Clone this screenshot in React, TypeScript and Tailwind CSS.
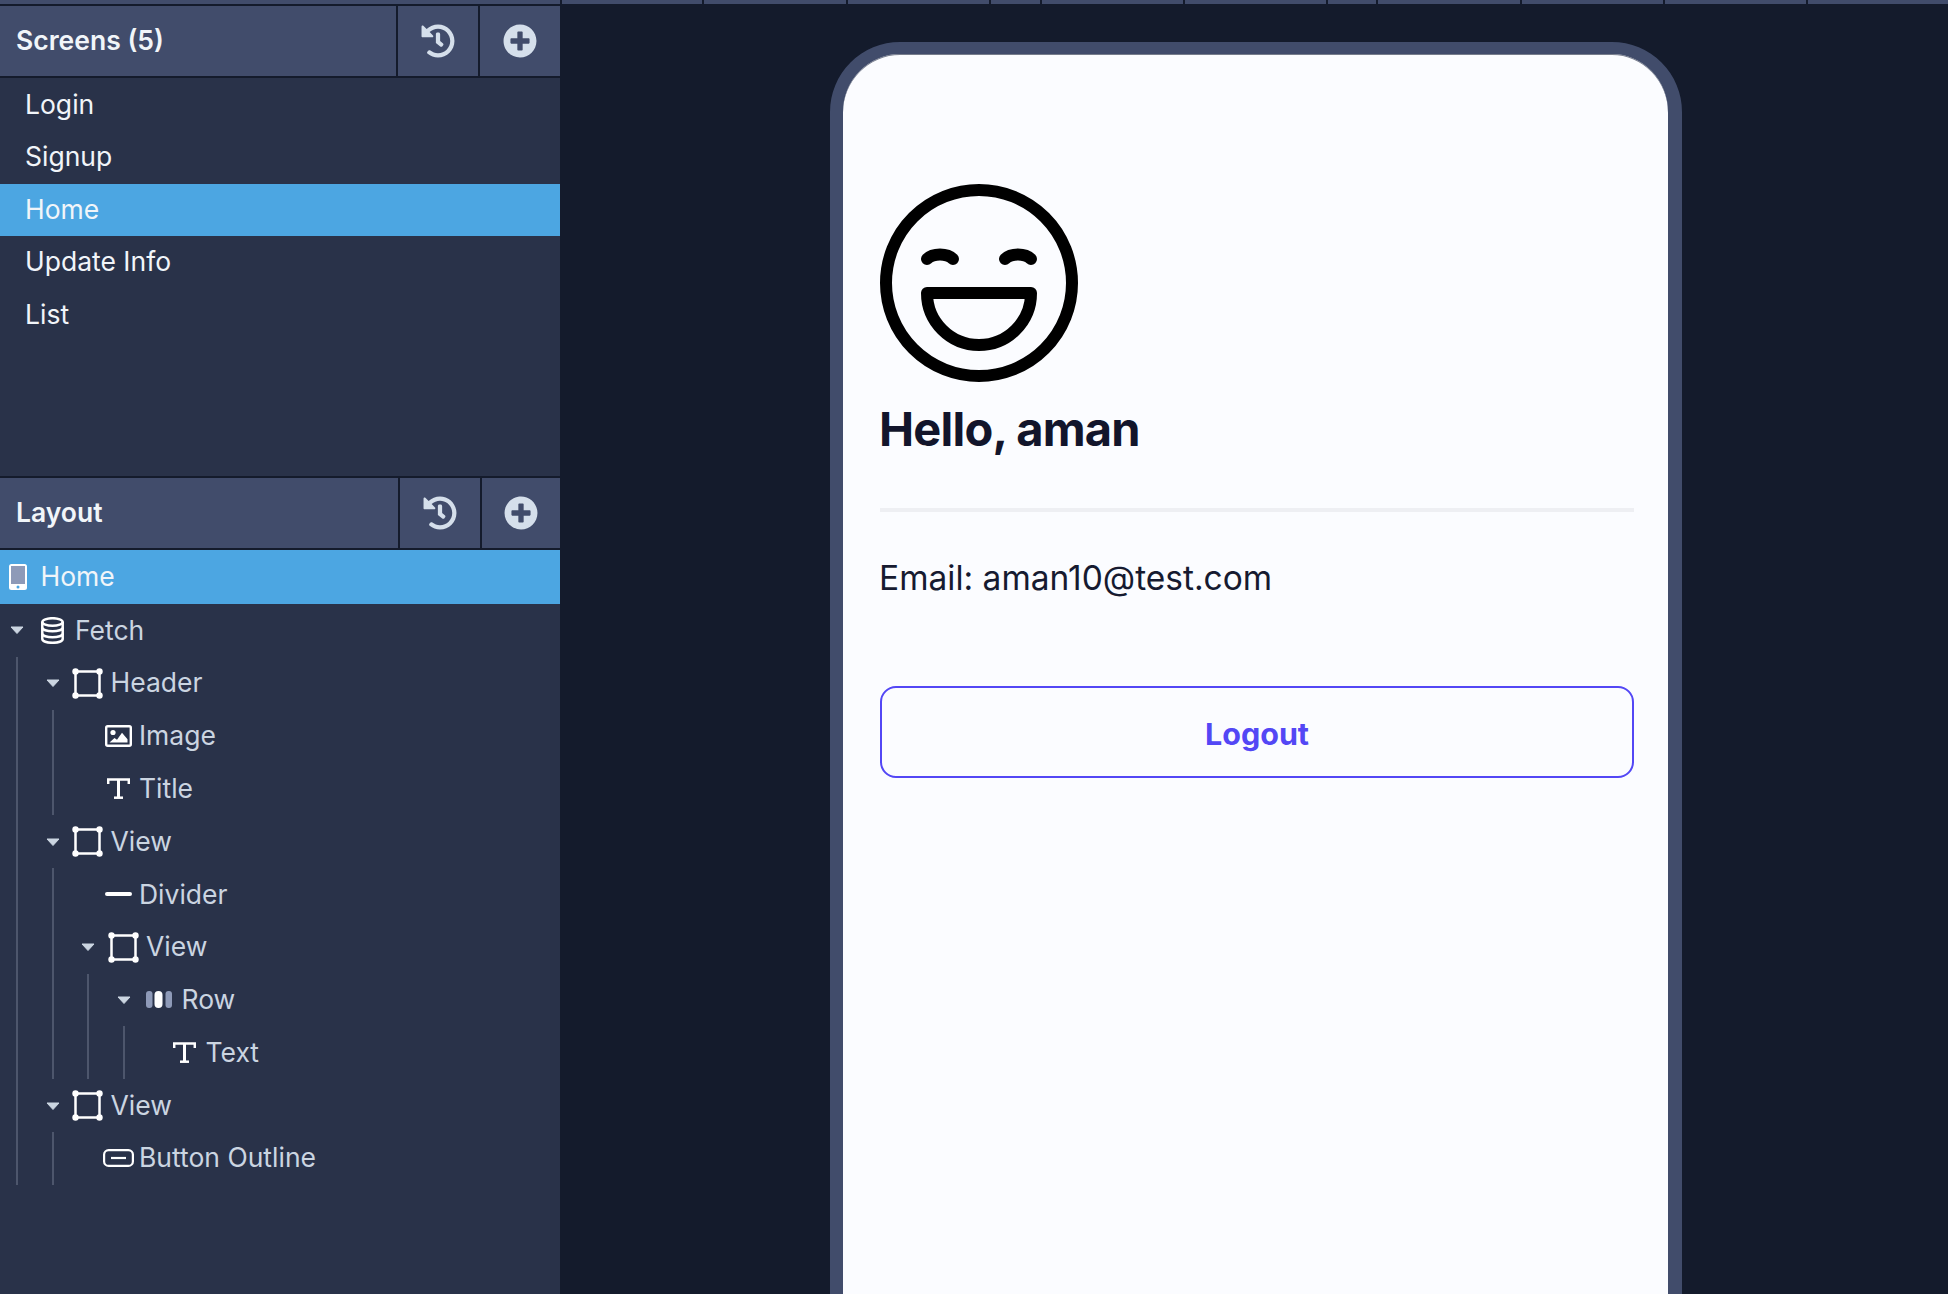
import { FaHistory, FaPlusCircle } from "react-icons/fa";

type Node = {
  label: string;
  icon: React.ReactNode;
  leafClass?: string;
  children?: Node[];
};

const screens = ["Login", "Signup", "Home", "Update Info", "List"];
const stripStops = [140, 142, 141, 49, 141, 141, 48, 142, 141, 141, 142];

function FrameIcon() {
  return (
    <svg width="31" height="31" viewBox="0 0 31 31" fill="none">
      <rect x="3.5" y="3.5" width="24" height="24" stroke="white" strokeWidth="2.5" />
      <circle cx="3.5" cy="3.5" r="3.2" fill="white" />
      <circle cx="27.5" cy="3.5" r="3.2" fill="white" />
      <circle cx="3.5" cy="27.5" r="3.2" fill="white" />
      <circle cx="27.5" cy="27.5" r="3.2" fill="white" />
    </svg>
  );
}

function DatabaseIcon() {
  return (
    <svg width="23" height="27" viewBox="0 0 23 27" fill="none" stroke="white" strokeWidth="2.500">
      <ellipse cx="11.5" cy="5" rx="10.2" ry="3.800" />
      <path d="M1.300 5v17c0 2.200 4.600 3.800 10.200 3.800S21.700 24.200 21.700 22V5" />
      <path d="M1.300 10.500c0 2.200 4.600 3.800 10.200 3.800s10.200-1.600 10.200-3.800" />
      <path d="M1.300 16.500c0 2.200 4.600 3.800 10.200 3.800s10.200-1.600 10.200-3.800" />
    </svg>
  );
}

function ImageIcon() {
  return (
    <svg width="27" height="22" viewBox="0 0 27 22" fill="none">
      <rect x="1.200" y="1.200" width="24.600" height="19.600" rx="1.500" stroke="white" strokeWidth="2.400" />
      <circle cx="8" cy="7.500" r="2.600" fill="white" />
      <path d="M4.500 17.500l5-4.500 2.500 1.800 5-7 5.500 6.500v3.200z" fill="white" />
    </svg>
  );
}

function TypeIcon() {
  return (
    <svg width="23" height="21" viewBox="0 0 23 21" fill="none" stroke="white">
      <path d="M1.200 6V1.500h20.600V6" strokeWidth="2.500" />
      <path d="M11.500 1.500v18" strokeWidth="3" />
      <path d="M7 19.700h9" strokeWidth="2.500" />
    </svg>
  );
}

function RowIcon() {
  return (
    <svg width="26" height="17" viewBox="0 0 26 17">
      <rect x="0" y="0" width="6.500" height="17" rx="3" fill="#8e9ab8" />
      <rect x="8.500" y="0" width="8" height="17" rx="4" fill="white" />
      <rect x="19.500" y="0" width="6.500" height="17" rx="3" fill="#8e9ab8" />
    </svg>
  );
}

function ButtonIcon() {
  return (
    <svg width="31" height="18" viewBox="0 0 31 18" fill="none" stroke="white" strokeWidth="2.200">
      <rect x="1.100" y="1.100" width="28.800" height="15.800" rx="4.500" />
      <path d="M8 9h15" />
    </svg>
  );
}

function PhoneIcon() {
  return (
    <svg width="18" height="26" viewBox="0 0 18 26">
      <rect x="0" y="0" width="18" height="26" rx="2.500" fill="white" />
      <rect x="2" y="2" width="14" height="18" fill="#8e9ab8" />
      <circle cx="9" cy="23" r="1.500" fill="#4ca6e2" />
    </svg>
  );
}

function Caret() {
  return (
    <svg width="14" height="8" viewBox="0 0 14 8">
      <path d="M1 1h12L7 7.500z" fill="#cbd5e1" stroke="#cbd5e1" strokeLinejoin="round" />
    </svg>
  );
}

const divider = <div className="w-[27px] h-1 rounded-full bg-white" />;

const tree: Node = {
  label: "Fetch",
  icon: <DatabaseIcon />,
  children: [
    {
      label: "Header",
      icon: <FrameIcon />,
      children: [
        { label: "Image", icon: <ImageIcon /> },
        { label: "Title", icon: <TypeIcon /> },
      ],
    },
    {
      label: "View",
      icon: <FrameIcon />,
      children: [
        { label: "Divider", icon: divider },
        {
          label: "View",
          icon: <FrameIcon />,
          children: [
            {
              label: "Row",
              icon: <RowIcon />,
              children: [{ label: "Text", icon: <TypeIcon />, leafClass: "ml-[20px]" }],
            },
          ],
        },
      ],
    },
    {
      label: "View",
      icon: <FrameIcon />,
      children: [{ label: "Button Outline", icon: <ButtonIcon /> }],
    },
  ],
};

function TreeNode({ node }: { node: Node }) {
  const hasKids = !!node.children;
  return (
    <div>
      <div className="h-[52.8px] flex items-center text-[26.5px] text-[#cbd5e1]">
        {hasKids ? (
          <div className="w-6 flex justify-center shrink-0">
            <Caret />
          </div>
        ) : null}
        <div className={`w-[35px] flex justify-center shrink-0 ${hasKids ? "ml-[5.5px]" : node.leafClass ?? "ml-[24.5px]"}`}>
          {node.icon}
        </div>
        <span className={hasKids ? "ml-[5.5px]" : "ml-[3.5px]"}>{node.label}</span>
      </div>
      {node.children ? (
        <div className="ml-[11px] border-l-2 border-[#4d566c] pl-[22.5px]">
          {node.children.map((c, i) => (
            <TreeNode key={i} node={c} />
          ))}
        </div>
      ) : null}
    </div>
  );
}

function PanelHeader({ title, wide }: { title: string; wide?: boolean }) {
  return (
    <div className="h-[70px] shrink-0 flex items-stretch bg-[#414c6b]">
      <div className="flex-1 flex items-center pl-4 text-[26.5px] font-semibold text-[#f1f5f9]">{title}</div>
      <div className="w-[82px] border-l-2 border-[#141b2c] flex items-center justify-center text-[#d5dfeb]">
        <FaHistory size={34} />
      </div>
      <div className={`${wide ? "w-[82px]" : "w-20"} border-l-2 border-[#141b2c] flex items-center justify-center text-[#d5dfeb]`}>
        <FaPlusCircle size={34} />
      </div>
    </div>
  );
}

export default function App() {
  return (
    <div className="flex h-[1294px] w-full overflow-hidden bg-[#141b2c] font-['Inter',sans-serif]">
      {/* Sidebar */}
      <aside className="w-[560px] shrink-0 flex flex-col bg-[#293249]">
        <div className="h-1 bg-[#414c6b] shrink-0" />
        <div className="h-[2px] bg-[#141b2c] shrink-0" />
        <PanelHeader title="Screens (5)" wide />
        <div className="h-[2px] bg-[#141b2c] shrink-0" />

        <div className="h-[398px] shrink-0 pt-[0.5px]">
          {screens.map((s) => (
            <div
              key={s}
              className={`h-[52.5px] flex items-center pl-[25px] text-[26.5px] text-[#f1f5f9] ${s === "Home" ? "bg-[#4ca6e2] pt-[1px]" : ""}`}
            >
              {s}
            </div>
          ))}
        </div>

        <div className="h-[2px] bg-[#141b2c] shrink-0" />
        <PanelHeader title="Layout" />
        <div className="h-[2px] bg-[#141b2c] shrink-0" />

        <div className="h-[54px] shrink-0 flex items-center bg-[#4ca6e2] pl-[9px] text-[26.5px] text-[#f1f5f9]">
          <PhoneIcon />
          <span className="ml-[13.5px] pb-[1px]">Home</span>
        </div>
        <div className="pl-[5px]">
          <TreeNode node={tree} />
        </div>
      </aside>

      {/* Canvas */}
      <main className="flex-1 min-w-0 flex flex-col">
        <div className="h-1 shrink-0 flex gap-[2px] pl-[2px] overflow-hidden">
          {stripStops.map((w, i) => (
            <div key={i} className="h-full bg-[#414c6b] shrink-0" style={{ width: w }} />
          ))}
        </div>

        <div className="flex-1 flex justify-center pt-[38px] overflow-hidden pl-[4px]">
          <div className="w-[852px] h-[1400px] shrink-0 rounded-[70px] border-[13px] border-t-[12px] border-r-[14px] border-[#414c6b] bg-[#fbfcff] shadow-[inset_0_1px_0_#777d8c] pl-[37px] pr-[34px] pt-[130px]">
            <svg width="198" height="198" viewBox="0 0 198 198" fill="none" stroke="black" strokeWidth="12" strokeLinecap="round" strokeLinejoin="round">
              <circle cx="99" cy="99" r="93" />
              <path d="M47 75C53 69 67 69 73 75" />
              <path d="M125 75C131 69 145 69 151 75" />
              <path d="M47 109H151A52 52 0 0 1 47 109Z" />
            </svg>

            <h1 className="mt-[19px] text-[47px] leading-[56px] font-bold tracking-[-0.8px] text-[#12152b] -ml-px">Hello, aman</h1>

            <div className="mt-[51px] h-1 bg-[#eeeff3]" />

            <p className="mt-[46px] text-[33.5px] leading-[40px] text-[#161a30] -ml-px">Email: aman10@test.com</p>

            <button className="mt-[88px] w-full h-[92px] pt-[3px] rounded-[16px] border-2 border-[#5347f5] text-[30.5px] font-bold text-[#5347f5]">
              Logout
            </button>
          </div>
        </div>
      </main>
    </div>
  );
}
